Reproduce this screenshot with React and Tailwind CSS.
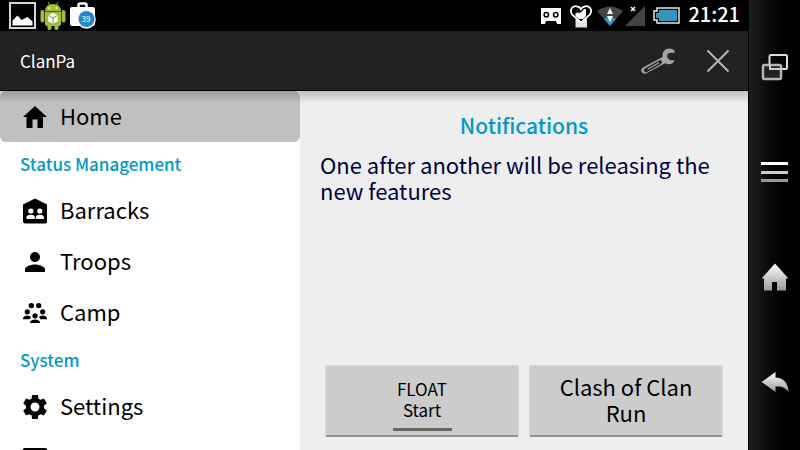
import { useState } from "react";
import { MdSettings, MdPerson, MdEmail } from "react-icons/md";

const HomeIcon = () => (
  <svg viewBox="0 0 24 24" className="w-6 h-6" fill="currentColor">
    <path d="M12 1L0 12h3.500V22q0 1 1 1H9.500V14.500h5V23h4.500q1 0 1-1V12H24z" />
  </svg>
);

const BarracksIcon = () => (
  <svg viewBox="0 0 26 26" className="w-[26px] h-[26px] shrink-0" fill="currentColor">
    <path d="M13 0.500L25 6.500V23.500q0 2-2 2H3q-2 0-2-2V6.500z" />
    <g fill="#fff">
      <circle cx="8.800" cy="13" r="2.600" />
      <circle cx="17.800" cy="13" r="2.600" />
      <path d="M4.500 21v-1.500q0-2.700 4.300-2.700t4.100 2.700V21zM13.800 21v-1.500q0-2.700 4-2.700t4.200 2.700V21z" />
    </g>
  </svg>
);

const CampIcon = () => (
  <svg viewBox="0 0 24 24" className="w-6 h-6" fill="currentColor">
    <circle cx="8.300" cy="4.600" r="2.700" />
    <circle cx="15.700" cy="4.600" r="2.700" />
    <circle cx="4.300" cy="10.800" r="2.600" />
    <circle cx="19.700" cy="10.800" r="2.600" />
    <circle cx="12" cy="14.800" r="2.600" />
    <path d="M0 18.200v-1q1-2.700 4.300-2.700 2.600 0 3.700 1.500L6.500 18.200zM24 18.200v-1q-1-2.700-4.300-2.700-2.600 0-3.700 1.500l1.500 2.200zM7 22v-1q1-2.500 5-2.500t5 2.500v1z" />
  </svg>
);

const PictureIcon = () => (
  <svg viewBox="0 0 27 27" className="w-[27px] h-[27px]">
    <rect x="1" y="1" width="25" height="25" fill="#000" stroke="#d8d8d8" strokeWidth="2" />
    <path d="M3.500 23.500v-5l5-5 4 4.500 2-1 4-2 5 4.500v4z" fill="#fff" />
  </svg>
);

const AndroidIcon = () => (
  <svg viewBox="0 0 26 29" className="w-[26px] h-[29px]" fill="#a0bd34">
    <path d="M8 1l2 4M18 1l-2 4" stroke="#a0bd34" strokeWidth="1" />
    <path d="M5 10q.5-7 8-7T21 10z" />
    <path d="M5 10.600h16V23q0 2-2 2H7q-2 0-2-2z" />
    <rect x="0.500" y="9" width="3.900" height="12.500" rx="1.900" />
    <rect x="21.600" y="9" width="3.900" height="12.500" rx="1.900" />
    <rect x="7.500" y="22" width="4" height="7" rx="1.800" />
    <rect x="14.500" y="22" width="4" height="7" rx="1.800" />
    <circle cx="9.500" cy="7" r="0.900" fill="#fff" />
    <circle cx="16.500" cy="7" r="0.900" fill="#fff" />
    <path d="M13 12l4.800 2.200v6L13 22.700l-4.800-2.500v-6z" fill="#fff" />
    <path d="M8.500 14.500L13 17l4.500-2.500M13 17v5.500" stroke="#7f9c22" fill="none" />
  </svg>
);

const BagIcon = () => (
  <span className="relative w-[26px] h-[27px]">
    <svg viewBox="0 0 26 27" className="w-full h-full">
      <path d="M8.500 7V3q0-1.500 1.500-1.500h5q1.500 0 1.500 1.500v4" stroke="#fff" strokeWidth="2.500" fill="none" />
      <rect x="0" y="5" width="25" height="19" rx="2" fill="#fff" />
      <circle cx="16.500" cy="17.500" r="9.300" fill="#fff" />
      <circle cx="16.500" cy="17" r="8" fill="#2586cb" />
    </svg>
    <span className="absolute left-2 top-3 w-4 text-center text-[8px] leading-[10px] text-white">39</span>
  </span>
);

const StatusIcons = () => (
  <div className="flex items-center">
    <svg viewBox="0 0 20 16" className="w-5 h-4">
      <path d="M0 0h20v16h-4l-1-3H5l-1 3H0z" fill="#fff" />
      <circle cx="5.300" cy="6.700" r="2.200" fill="#fff" stroke="#000" strokeWidth="1.500" />
      <circle cx="14.700" cy="6.700" r="2.200" fill="#fff" stroke="#000" strokeWidth="1.500" />
    </svg>
    <svg viewBox="0 0 24 24" className="w-6 h-6 ml-2">
      <path d="M6.500 13h11.500v10.500H6.500z" fill="#e2e2e2" />
      <path d="M12 18.500L3.500 11C-.5 6 4 1 8 2.500q2.500 0 4 2.500 1.500-2.500 4-2.500c4-1.500 8.500 3.500 4.500 8.500z" fill="#000" stroke="#fff" strokeWidth="1.800" />
      <path d="M6.500 9l5.500-.5 3-3.500h2v7l-3 3h-4L6.500 12z" fill="#fff" />
    </svg>
    <svg viewBox="0 0 26 20" className="w-[26px] h-5 ml-1">
      <path d="M0 5Q13-4 26 5L13 20z" fill="#444" />
      <path d="M7 13q6-4 12 0l-6 7z" fill="#3296bc" />
      <path d="M13 2l3 6h-6zM13 16l-3-6h6z" fill="#fff" />
    </svg>
    <svg viewBox="0 0 20 20" className="w-5 h-5 ml-0.5">
      <path d="M20 0v20H0z" fill="#444" />
      <path d="M6 1l4 4M10 1L6 5" stroke="#fff" strokeWidth="1.500" />
    </svg>
    <svg viewBox="0 0 27 17" className="w-[27px] h-[17px] ml-2">
      <path d="M4 1h22v15H4v-3H1V4h3z" fill="#000" stroke="#e8e8e8" strokeWidth="1.500" />
      <path d="M6 3h18v11H6v-3H3V6h3z" fill="#3594b8" />
    </svg>
    <span className="ml-2 pb-1 text-xl leading-6 font-medium text-white">21:21</span>
  </div>
);

const WrenchIcon = () => (
  <svg viewBox="0 0 36 28" className="w-9 h-7">
    <path
      d="M34.500 3.500Q31 .5 26.500 2 22 4 22.500 10L3 20.500Q.5 22 1.500 25 3.500 27.800 6.500 26.300L25 16.300Q32 19 34.700 13.200L30.300 13.200 27.200 10.500 27.500 7.300 30.300 5.700 34.500 5.900z"
      fill="#a5a5a5"
    />
    <path d="M6 23.300L20 15.200" stroke="#222" strokeWidth="4" strokeLinecap="round" />
    <path d="M8 22L18.500 16" stroke="#a5a5a5" strokeWidth="1.200" strokeLinecap="round" />
  </svg>
);

const menu = [
  { label: "Home", icon: <HomeIcon /> },
  { heading: "Status Management" },
  { label: "Barracks", icon: <BarracksIcon /> },
  { label: "Troops", icon: <MdPerson className="w-[30px] h-[30px] shrink-0" /> },
  { label: "Camp", icon: <CampIcon /> },
  { heading: "System" },
  { label: "Settings", icon: <MdSettings className="w-[30px] h-[30px] shrink-0" /> },
  { label: "Contact", icon: <MdEmail className="w-[30px] h-[30px] shrink-0" /> },
];

const Sidebar = () => {
  const [active, setActive] = useState("Home");

  return (
    <nav className="w-[300px] shrink-0 bg-white overflow-hidden">
      {menu.map((m) =>
        m.heading ? (
          <h2 key={m.heading} className="px-5 text-[17px] leading-[43px] font-medium text-[#0099cc]">
            {m.heading}
          </h2>
        ) : (
          <button
            key={m.label}
            onClick={() => setActive(m.label)}
            className={`flex items-center w-full h-[51px] px-5 gap-[10px] text-[22px] leading-7 text-black rounded-md ${
              active === m.label ? "bg-[#c0c0c0]" : ""
            }`}
          >
            <span className="flex justify-center w-[30px]">{m.icon}</span>
            <span className="pb-1">{m.label}</span>
          </button>
        )
      )}
    </nav>
  );
};

const buttonBase =
  "flex flex-col items-center justify-center h-[72px] bg-[#ccc] text-black rounded-xs border border-[#d8d8d8] border-b-2 border-b-[#929292]";

const SystemKeys = () => (
  <aside className="flex flex-col items-center w-[52px] shrink-0 bg-linear-to-r from-[#1e1e1e] to-black border-l border-black">
    <svg width="0" height="0" className="absolute">
      <linearGradient id="metal" x1="0" y1="0" x2="0" y2="1">
        <stop offset="0" stopColor="#fff" />
        <stop offset="1" stopColor="#999" />
      </linearGradient>
    </svg>
    <button aria-label="Recent apps" className="flex items-center justify-center w-full h-[105px] mt-[14px]">
      <svg viewBox="0 0 28 28" className="w-7 h-7" fill="none" strokeWidth="2">
        <rect x="8.500" y="2" width="17.500" height="14" rx="1.500" stroke="#ddd" />
        <rect x="2" y="12" width="18" height="14" rx="1.500" fill="#222" stroke="#b5b5b5" strokeWidth="2.500" />
        <path d="M9 11.500V16h11" stroke="#ccc" />
      </svg>
    </button>
    <button aria-label="Menu" className="flex items-center justify-center w-full h-[105px]">
      <svg viewBox="0 0 28 22" className="w-7 h-[22px]">
        <rect y="1" width="27" height="3" fill="#fff" />
        <rect y="10" width="27" height="3" fill="#ccc" />
        <rect y="18" width="27" height="3" fill="#999" />
      </svg>
    </button>
    <button aria-label="Home screen" className="flex items-center justify-center w-full h-[105px]">
      <svg viewBox="0 0 28 28" className="w-7 h-7" fill="url(#metal)">
        <path d="M14 0.500L0.500 15.500H3V27.500h8V19h5v8.500h9V15.500h2.500z" />
      </svg>
    </button>
    <button aria-label="Back" className="flex items-center justify-center w-full h-[105px]">
      <svg viewBox="0 0 28 22" className="w-7 h-[22px]" fill="url(#metal)">
        <path d="M0.500 11L14.500 1v5.500C22 7 27 11 27.500 20.500 23.500 16 20 15 14.500 15.500V21z" />
      </svg>
    </button>
  </aside>
);

const App = () => {
  return (
    <div className="flex h-screen overflow-hidden bg-black font-['Noto_Sans_CJK_JP',sans-serif]">
      <div className="flex flex-col flex-1 min-w-0">
        <div className="flex items-center justify-between h-[31px] shrink-0 pl-[9px] pr-2 bg-black">
          <div className="flex items-center gap-1">
            <PictureIcon />
            <AndroidIcon />
            <BagIcon />
          </div>
          <StatusIcons />
        </div>

        <header className="flex items-center justify-between h-[60px] shrink-0 pl-5 pr-[18px] bg-[#222] border-b border-black">
          <h1 className="text-[17px] leading-6 text-white">ClanPa</h1>
          <div className="flex items-center gap-[30px]">
            <button aria-label="Tools">
              <WrenchIcon />
            </button>
            <button aria-label="Close">
              <svg viewBox="0 0 24 24" className="w-6 h-6" stroke="#b5b5b5" strokeWidth="2">
                <path d="M1.500 1.500l21 21M22.500 1.500l-21 21" />
              </svg>
            </button>
          </div>
        </header>

        <div className="relative flex flex-1 min-h-0 bg-[#eee]">
          <Sidebar />
          <main className="flex flex-col flex-1 min-w-0 pt-5 pb-[13px]">
            <h2 className="text-[21px] leading-7 font-medium text-center text-[#0099cc]">Notifications</h2>
            <p className="px-5 mt-3 text-[22px] leading-[26px] text-[#000040]">
              One after another will be releasing the new features
            </p>
            <div className="grid grid-cols-2 gap-[10px] px-[25px] mt-auto">
              <button className={`${buttonBase} text-[17px] leading-[21px]`}>
                <span className="w-[59px] pt-2 pb-2 border-b-3 border-[#666]">FLOAT Start</span>
              </button>
              <button className={`${buttonBase} text-[22px] leading-[26px] px-6 pb-1`}>Clash of Clan Run</button>
            </div>
          </main>
          <div className="absolute inset-x-0 top-0 h-3 bg-linear-to-b from-black/20 to-transparent pointer-events-none" />
        </div>
      </div>
      <SystemKeys />
    </div>
  );
};

export default App;
